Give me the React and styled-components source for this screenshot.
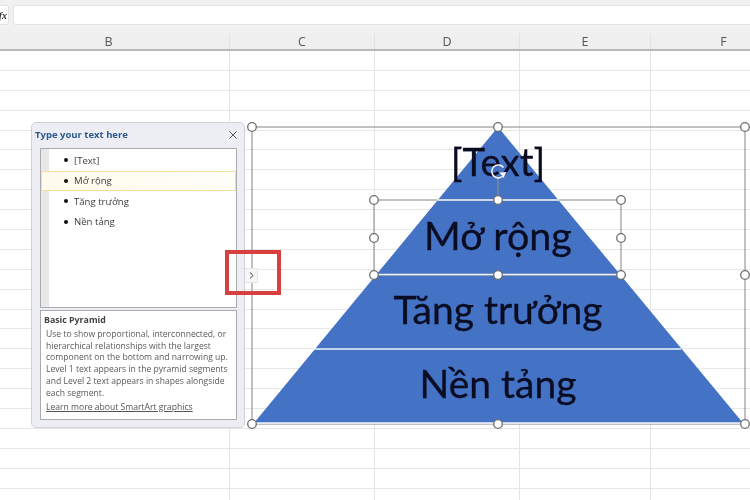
import React from "react";
import styled, { createGlobalStyle } from "styled-components";

const Global = createGlobalStyle`
  html, body { margin: 0; padding: 0; background: #fff; overflow: hidden; }
  #root { width: 750px; height: 500px; }
`;

const Page = styled.div`
  position: relative;
  width: 750px;
  height: 500px;
  overflow: hidden;
  display: flex;
  flex-direction: column;
  background: #fff;
  font-family: "Open Sans", "Noto Sans", sans-serif;
  filter: blur(0.35px);
`;

const FormulaBar = styled.div`
  height: 33px;
  flex: none;
  box-sizing: border-box;
  padding: 5px 0 8px;
  display: flex;
  gap: 4px;
  background: #f1f1f1;
`;

const FxButton = styled.div`
  width: 9px;
  height: 20px;
  flex: none;
  box-sizing: border-box;
  background: #fff;
  border: 1px solid #e2e2e2;
  border-left: 0;
  border-radius: 0 3px 3px 0;
  overflow: hidden;
  display: flex;
  justify-content: flex-end;
  align-items: center;
  font: italic 700 10px "Liberation Serif", serif;
  color: #333;
  padding-right: 1px;
`;

const FormulaInput = styled.div`
  flex: 1;
  background: #fff;
  border: 1px solid #e4e4e4;
  border-right: 0;
  border-radius: 3px 0 0 3px;
`;

const ColumnHeaders = styled.div`
  height: 18px;
  flex: none;
  box-sizing: border-box;
  margin-left: -12px;
  display: flex;
  background: #efefef;
  border-bottom: 2px solid #b9b9b9;
`;

const ColumnHeader = styled.div`
  width: ${(p) => p.$w}px;
  flex: none;
  box-sizing: border-box;
  border-right: 1px solid #e2e2e2;
  text-align: center;
  font-size: 12.5px;
  line-height: 17px;
  color: #555;
`;

const Sheet = styled.div`
  flex: 1;
  margin-left: -12px;
  display: flex;
  flex-direction: column;
  overflow: hidden;
`;

const Row = styled.div`
  height: 19.9px;
  flex: none;
  box-sizing: border-box;
  display: flex;
  border-bottom: 1px solid #e7e7e7;
`;

const Cell = styled.div`
  width: ${(p) => p.$w}px;
  flex: none;
  box-sizing: border-box;
  border-right: 1px solid #e4e4e4;
`;

const Panel = styled.aside`
  position: absolute;
  left: 31px;
  top: 122px;
  width: 214px;
  height: 306px;
  box-sizing: border-box;
  padding: 0 7px 0 8px;
  display: flex;
  flex-direction: column;
  background: #edeef4;
  border: 1px solid #cfd2da;
  border-radius: 5px;
`;

const PanelHeader = styled.header`
  height: 25px;
  flex: none;
  box-sizing: border-box;
  padding-bottom: 2px;
  display: flex;
  align-items: center;
  justify-content: space-between;
  margin-left: -5px;
`;

const PanelTitle = styled.h2`
  margin: 0;
  font: 700 9.5px "Open Sans", sans-serif;
  color: #2c5a8d;
`;

const CloseButton = styled.svg`
  width: 8px;
  height: 8px;
  stroke: #555;
  stroke-width: 1;
  fill: none;
`;

const OutlineBox = styled.div`
  height: 160px;
  flex: none;
  box-sizing: border-box;
  border: 1px solid #a9abb0;
  padding-top: 1px;
  display: flex;
  flex-direction: column;
  background: linear-gradient(90deg, #e8e8e8 8px, #fff 8px);
`;

const OutlineList = styled.ul`
  list-style: none;
  margin: 0;
  padding: 0;
`;

const OutlineItem = styled.li`
  height: 20.5px;
  box-sizing: border-box;
  padding-left: 22px;
  display: flex;
  align-items: center;
  gap: 6px;
  font-size: 9.6px;
  color: #3a3a3a;
  border: 1px solid ${(p) => (p.$active ? "#f7dc9c" : "transparent")};
  background: ${(p) => (p.$active ? "linear-gradient(90deg, #fffaec, #fffef9)" : "transparent")};
`;

const Bullet = styled.span`
  width: 4px;
  height: 4px;
  flex: none;
  border-radius: 50%;
  background: #111;
`;

const InfoBox = styled.section`
  height: 110px;
  flex: none;
  margin-top: 2px;
  box-sizing: border-box;
  background: #fff;
  border: 1px solid #a9abb0;
  padding: 2px 4px 0 3px;
`;

const InfoTitle = styled.h3`
  margin: 0;
  font: 700 8.8px/14px "Open Sans", sans-serif;
  color: #444;
`;

const InfoText = styled.p`
  margin: 2px 0 2px 2px;
  font-size: 8.6px;
  line-height: 11.7px;
  color: #5a5a5a;
  white-space: nowrap;
`;

const InfoLink = styled.a`
  display: block;
  margin-left: 2px;
  font-size: 8.6px;
  line-height: 12px;
  color: #555;
  text-decoration: underline;
`;

const ToggleTab = styled.div`
  position: absolute;
  left: 245px;
  top: 268px;
  width: 13px;
  height: 15px;
  box-sizing: border-box;
  display: flex;
  align-items: center;
  justify-content: center;
  background: #f6f6f6;
  border: 1px solid #e6e6e6;
  border-left: 0;
`;

const ToggleIcon = styled.svg`
  width: 5px;
  height: 7px;
  fill: none;
  stroke: #8a8a8a;
  stroke-width: 1.1;
`;

const Highlight = styled.div`
  position: absolute;
  left: 225px;
  top: 250px;
  width: 56px;
  height: 45px;
  box-sizing: border-box;
  border: 4px solid #d83f3f;
`;

const Diagram = styled.svg`
  position: absolute;
  left: 0;
  top: 0;
  width: 750px;
  height: 500px;
`;

const Label = styled.text`
  font-family: "Lato", "Open Sans", sans-serif;
  font-size: ${(p) => p.$size}px;
  fill: #0a0c22;
  stroke: #0a0c22;
  stroke-width: 0.3;
  text-anchor: middle;
`;

const columns = [242, 145, 145, 131, 146];
const headers = ["B", "C", "D", "E", "F"];
const rows = Array.from({ length: 23 });
const items = ["[Text]", "Mở rộng", "Tăng trưởng", "Nền tảng"];
const infoLines = [
  "Use to show proportional, interconnected, or",
  "hierarchical relationships with the largest",
  "component on the bottom and narrowing up.",
  "Level 1 text appears in the pyramid segments",
  "and Level 2 text appears in shapes alongside",
  "each segment.",
];
const labels = [
  { text: "[Text]", y: 176, size: 38.5 },
  { text: "Mở rộng", y: 250, size: 39.5 },
  { text: "Tăng trưởng", y: 324, size: 39 },
  { text: "Nền tảng", y: 398, size: 39 },
];
const handles = [
  [252, 127], [498, 127], [745, 127], [252, 275], [745, 275], [252, 424], [498, 424], [745, 424],
  [374, 200], [498, 200], [621, 200], [374, 238], [621, 238], [374, 275], [498, 275], [621, 275],
];

export default function App() {
  return (
    <Page>
      <Global />
      <FormulaBar>
        <FxButton>fx</FxButton>
        <FormulaInput />
      </FormulaBar>
      <ColumnHeaders>
        {headers.map((h, i) => (
          <ColumnHeader key={h} $w={columns[i]}>{h}</ColumnHeader>
        ))}
      </ColumnHeaders>
      <Sheet>
        {rows.map((_, r) => (
          <Row key={r}>
            {columns.map((w, c) => (
              <Cell key={c} $w={w} />
            ))}
          </Row>
        ))}
      </Sheet>

      <Diagram viewBox="0 0 750 500">
        <polygon points="498,127 743,423 254,423" fill="#4472c4" />
        <g fill="none" stroke="#8f8f8f" strokeWidth="1.1">
          <rect x="252" y="127" width="493" height="297" />
          <rect x="374" y="200" width="247" height="75" />
          <line x1="498" y1="177" x2="498" y2="200" />
        </g>
        <g stroke="#f2f5fb" strokeWidth="1.3">
          <line x1="437" y1="200" x2="559" y2="200" />
          <line x1="376" y1="274.5" x2="620" y2="274.5" />
          <line x1="314" y1="349" x2="681" y2="349" />
          <line x1="254" y1="423" x2="743" y2="423" />
        </g>
        {labels.map((l) => (
          <Label key={l.text} x="498" y={l.y} $size={l.size}>{l.text}</Label>
        ))}
        <path d="M504 174.5 A6.5 6.5 0 1 1 503.5 167.5" fill="none" stroke="#f4f6fb" strokeWidth="1.5" />
        <path d="M499.5 172.5 L506.5 172 L503.5 178 Z" fill="#f4f6fb" />
        {handles.map(([x, y]) => (
          <circle key={`${x}-${y}`} cx={x} cy={y} r="4.3" fill="#fff" stroke="#6e6e6e" strokeWidth="1.3" />
        ))}
      </Diagram>

      <Panel>
        <PanelHeader>
          <PanelTitle>Type your text here</PanelTitle>
          <CloseButton viewBox="0 0 8 8">
            <path d="M.5.5l7 7M7.5.5l-7 7" />
          </CloseButton>
        </PanelHeader>
        <OutlineBox>
          <OutlineList>
            {items.map((t, i) => (
              <OutlineItem key={t} $active={i === 1}>
                <Bullet />
                {t}
              </OutlineItem>
            ))}
          </OutlineList>
        </OutlineBox>
        <InfoBox>
          <InfoTitle>Basic Pyramid</InfoTitle>
          <InfoText>
            {infoLines.map((l) => (
              <React.Fragment key={l}>{l}<br /></React.Fragment>
            ))}
          </InfoText>
          <InfoLink>Learn more about SmartArt graphics</InfoLink>
        </InfoBox>
      </Panel>
      <ToggleTab>
        <ToggleIcon viewBox="0 0 5 7">
          <path d="M1 .5l3 3-3 3" />
        </ToggleIcon>
      </ToggleTab>
      <Highlight />
    </Page>
  );
}
